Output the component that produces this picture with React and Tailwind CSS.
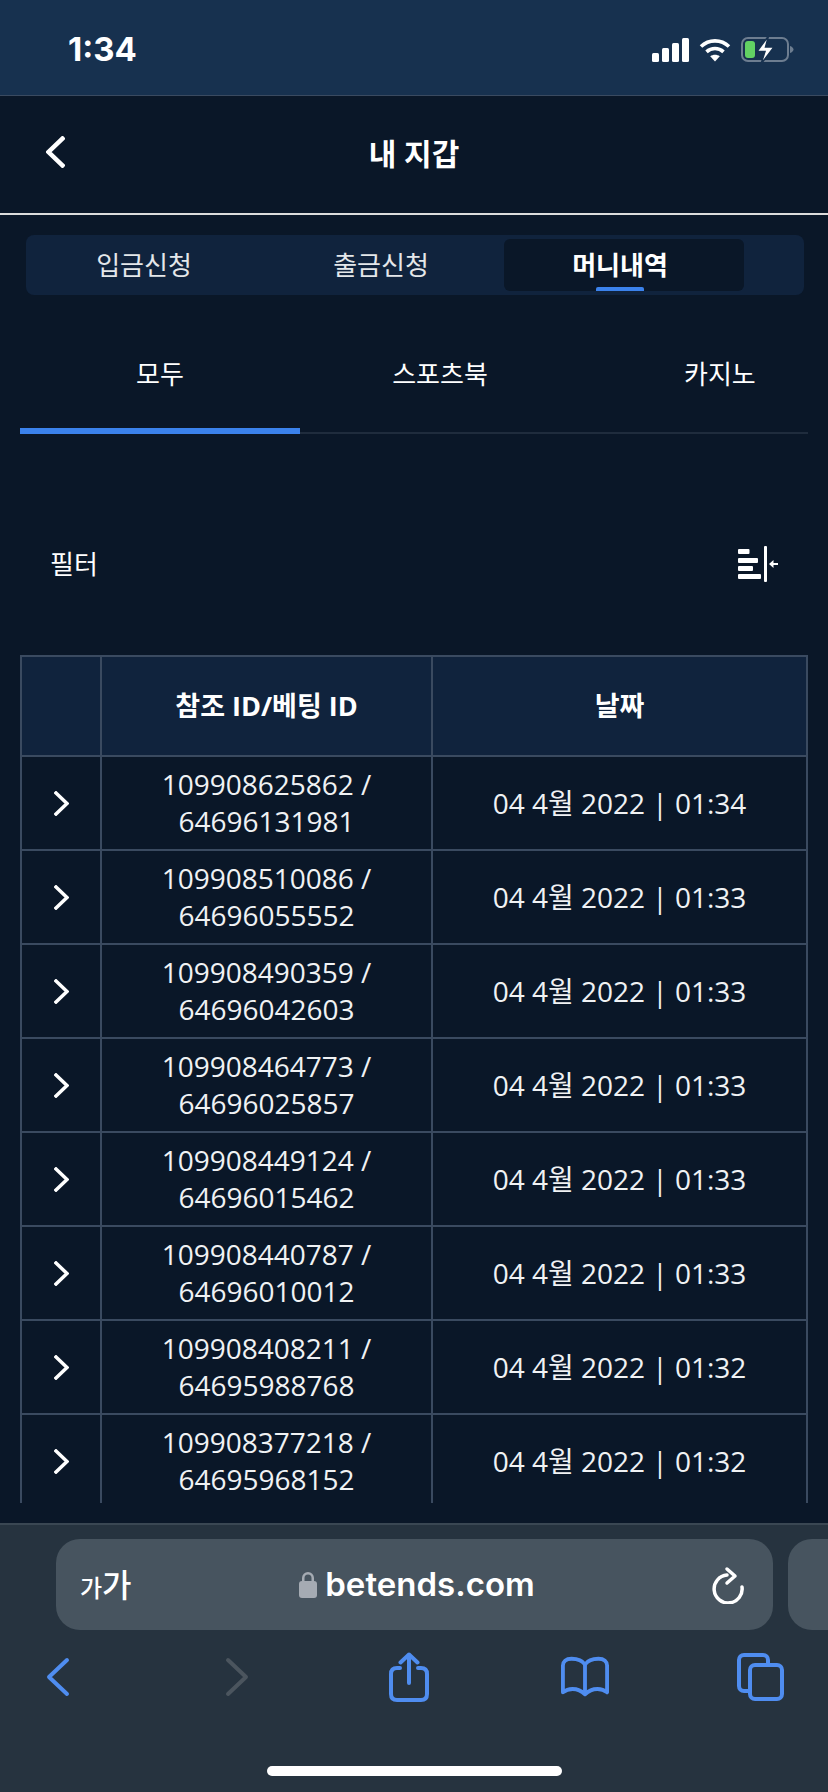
import React from "react";

const rows = [
  ["109908625862", "64696131981", "01:34"],
  ["109908510086", "64696055552", "01:33"],
  ["109908490359", "64696042603", "01:33"],
  ["109908464773", "64696025857", "01:33"],
  ["109908449124", "64696015462", "01:33"],
  ["109908440787", "64696010012", "01:33"],
  ["109908408211", "64695988768", "01:32"],
  ["109908377218", "64695968152", "01:32"],
];

const cellBorder = "border-2 border-[#3a4a60] border-t-0 p-0 text-center";

function StatusIcons() {
  return (
    <div className="flex items-center">
      {/* signal bars */}
      <svg width="37" height="24" viewBox="0 0 37 24" fill="#fff">
        <rect x="0" y="15" width="7" height="9" rx="1.5" />
        <rect x="10" y="10" width="7" height="14" rx="1.5" />
        <rect x="20" y="5" width="7" height="19" rx="1.5" />
        <rect x="30" y="0" width="7" height="24" rx="1.5" />
      </svg>
      {/* wifi */}
      <svg className="ml-[10px]" width="32" height="24" viewBox="0 0 32 24" fill="none" stroke="#fff" strokeWidth="3.6">
        <path d="M2 8.5C9.8 1 22.2 1 30 8.5" />
        <path d="M7.5 13.8c4.8-4.4 12.2-4.4 17 0" />
        <path d="M16 23.5l-4.8-5.2c2.8-2 6.8-2 9.6 0z" fill="#fff" stroke="none" />
      </svg>
      {/* charging battery */}
      <svg className="ml-[10px]" width="53" height="28" viewBox="0 0 53 28" fill="none">
        <rect x="1" y="2" width="46" height="23" rx="6" stroke="#6d7d90" strokeWidth="2" />
        <rect x="4" y="5" width="10" height="17" rx="3" fill="#62d163" />
        <path d="M49 10c2 .6 3.500 2 3.500 3.500S51 16.400 49 17z" fill="#6d7d90" />
        <path d="M27.500 0L16 15.500h8L20 28 33 11h-8.500z" fill="#fff" stroke="#17314f" strokeWidth="1.500" />
      </svg>
    </div>
  );
}

function FilterIcon() {
  return (
    <svg width="40" height="36" viewBox="0 0 40 36" fill="#fff">
      <rect x="0" y="3" width="11.500" height="5" rx="1" />
      <rect x="0" y="12" width="20" height="5" rx="1" />
      <rect x="0" y="20" width="15" height="5" rx="1" />
      <rect x="0" y="28" width="23" height="5" rx="1" />
      <rect x="26" y="0" width="3" height="36" rx="1" />
      <path d="M31 18l4.500-4v3h4.500v2h-4.500v3z" />
    </svg>
  );
}

function Chevron({ className, left, color = "#fff", width = 15, height = 25, stroke = 3.5 }) {
  const d = left ? "M13 2L2 12.500 13 23" : "M2 2l11 10.500L2 23";
  return (
    <svg className={className} width={width} height={height} viewBox="0 0 15 25" fill="none" preserveAspectRatio="none">
      <path d={d} stroke={color} strokeWidth={stroke} strokeLinecap="square" strokeLinejoin="miter" vectorEffect="non-scaling-stroke" />
    </svg>
  );
}

function WalletTable() {
  return (
    <table className="w-[788px] table-fixed border-collapse bg-[#0a1728] text-white">
      <thead>
        <tr className="h-[100px] bg-[#10233d] text-[27px] font-bold">
          <th className="w-[80px] border-2 border-[#3a4a60] p-0"></th>
          <th className="w-[331px] border-2 border-[#3a4a60] p-0">참조 ID/베팅 ID</th>
          <th className="border-2 border-[#3a4a60] p-0">날짜</th>
        </tr>
      </thead>
      <tbody className="text-[28px] leading-[37px] text-[#f0f2f4]">
        {rows.map((r) => (
          <tr key={r[0]} className="h-[94px]">
            <td className={cellBorder}>
              <div className="flex justify-center">
                <Chevron />
              </div>
            </td>
            <td className={cellBorder}>
              {r[0]} /<br />
              {r[1]}
            </td>
            <td className={cellBorder}>04 4월 2022 | {r[2]}</td>
          </tr>
        ))}
      </tbody>
    </table>
  );
}

function Toolbar() {
  return (
    <div className="mt-[22px] flex items-center justify-between pl-[34px] pr-[44px]">
      <div className="flex w-[48px] justify-center">
        <svg width="24" height="40" viewBox="0 0 24 40" fill="none" stroke="#4f8df0" strokeWidth="4" strokeLinecap="round" strokeLinejoin="round">
          <path d="M21 3L3 20l18 17" />
        </svg>
      </div>
      <div className="flex w-[48px] justify-center">
        <svg className="ml-[6px]" width="24" height="40" viewBox="0 0 24 40" fill="none" stroke="#4b555e" strokeWidth="4" strokeLinecap="round" strokeLinejoin="round">
          <path d="M3 3l18 17L3 37" />
        </svg>
      </div>
      <div className="flex w-[48px] justify-center">
        {/* share */}
        <svg width="40" height="50" viewBox="0 0 40 50" fill="none" stroke="#4f8df0" strokeWidth="4" strokeLinecap="round" strokeLinejoin="round">
          <path d="M20 31V2.500M11.500 10.500L20 2.500l8.500 8" />
          <path d="M11 16H8c-4 0-6 2-6 6v20c0 4 2 6 6 6h24c4 0 6-2 6-6V22c0-4-2-6-6-6h-3" />
        </svg>
      </div>
      <div className="flex w-[48px] justify-center">
        {/* bookmarks */}
        <svg width="50" height="42" viewBox="0 0 50 42" fill="none" stroke="#4f8df0" strokeWidth="4" strokeLinecap="round" strokeLinejoin="round">
          <path d="M25 8C22 3.500 17 2 11 2 5 2 2 5 2 9v28c3-2.500 6-3.500 10-3.500 6 0 10 2.500 13 5.500 3-3 7-5.500 13-5.500 4 0 7 1 10 3.500V9c0-4-3-7-9-7-6 0-11 1.500-14 6z" />
          <path d="M25 8v30" />
        </svg>
      </div>
      <div className="flex w-[48px] justify-center">
        {/* tabs */}
        <svg width="48" height="48" viewBox="0 0 48 48" fill="none" stroke="#4f8df0" strokeWidth="4" strokeLinejoin="round">
          <path d="M13 38H8c-3 0-5-2-5-5V7c0-3 2-5 5-5h19c3 0 5 2 5 5v4" />
          <rect x="14" y="12" width="32" height="34" rx="5" />
        </svg>
      </div>
    </div>
  );
}

export default function App() {
  return (
    <div className="flex h-[1792px] w-[828px] flex-col overflow-hidden bg-[#0a1728] text-white font-['Open_Sans','Noto_Sans_CJK_KR',sans-serif]">
      {/* status bar */}
      <div className="flex h-[96px] shrink-0 items-center justify-between border-b border-[#3a4a60] bg-[#17314f] pt-[4px] pl-[68px] pr-[34px]">
        <span className="font-['Inter',sans-serif] text-[33px] font-bold">1:34</span>
        <StatusIcons />
      </div>

      {/* header */}
      <div className="relative flex h-[119px] shrink-0 items-center justify-center border-b-2 border-[#dcdcdc] pb-[2px]">
        <Chevron className="absolute left-[46px] top-[40px]" left width={19} height={32} stroke={4.5} />
        <h1 className="text-[30px] font-bold">내 지갑</h1>
      </div>

      {/* wallet tabs */}
      <div className="ml-[26px] mt-[20px] flex h-[60px] w-[778px] shrink-0 items-center rounded-[8px] bg-[#10233d] text-[26px] text-[#e4e7ea]">
        <div className="w-[236px] text-center">입금신청</div>
        <div className="w-[238px] text-center">출금신청</div>
        <div className="relative ml-[4px] flex h-[52px] w-[240px] items-center justify-center rounded-[6px] bg-[#0a1728] pr-[8px] font-semibold text-white">
          머니내역
          <span className="absolute bottom-0 left-[92px] h-[4px] w-[48px] rounded-t-[2px] bg-[#3b82ec]"></span>
        </div>
      </div>

      {/* category tabs */}
      <div className="mx-[20px] mt-[49px] flex h-[90px] shrink-0 border-b-2 border-[#1f2c3d] text-[26px]">
        <div className="-mb-[2px] w-[280px] shrink-0 border-b-[6px] border-[#3b82ec] pt-[11px] text-center">모두</div>
        <div className="w-[280px] shrink-0 pt-[11px] text-center">스포츠북</div>
        <div className="w-[228px] shrink-0 overflow-visible pt-[11px] pl-[104px] whitespace-nowrap">카지노</div>
      </div>

      {/* filter row */}
      <div className="mt-[112px] flex h-[36px] shrink-0 items-center justify-between pl-[50px] pr-[50px] text-[26px]">
        <span>필터</span>
        <FilterIcon />
      </div>

      {/* history table, cut off by the browser bar */}
      <div className="mx-[20px] mt-[73px] mb-[20px] min-h-0 flex-1 overflow-hidden">
        <WalletTable />
      </div>

      {/* safari bottom bar */}
      <div className="h-[269px] shrink-0 border-t-2 border-[#3a4753] bg-[#26333f]">
        <div className="mt-[14px] flex gap-[15px] overflow-hidden pl-[56px]">
          <div className="flex h-[91px] w-[717px] shrink-0 items-center rounded-[24px] bg-[#47545f] pl-[24px] pr-[29px]">
            <span className="flex w-[52px] items-baseline font-medium whitespace-nowrap">
              <span className="text-[24px]">가</span>
              <span className="text-[32px]">가</span>
            </span>
            <div className="flex flex-1 items-center justify-center pr-[10px]">
              <svg width="18" height="27" viewBox="0 0 18 27" fill="#a5abb3">
                <path d="M3 11V7a6 6 0 0112 0v4h-2.500V7a3.500 3.500 0 00-7 0v4z" />
                <rect x="0" y="10" width="18" height="17" rx="3" />
              </svg>
              <span className="ml-[8px] font-['Inter',sans-serif] text-[33px] font-semibold">betends.com</span>
            </div>
            {/* reload */}
            <svg width="32" height="38" viewBox="0 0 32 38" fill="none" stroke="#fff" strokeWidth="3.500" strokeLinecap="round" strokeLinejoin="round">
              <path d="M30 21a14 14 0 1 1-15-12" />
              <path d="M15 3l8 7-8 7" />
            </svg>
          </div>
          <div className="h-[91px] w-[100px] shrink-0 rounded-[24px] bg-[#47545f]"></div>
        </div>
        <Toolbar />
        <div className="mx-auto mt-[64px] h-[10px] w-[295px] rounded-full bg-white"></div>
      </div>
    </div>
  );
}
